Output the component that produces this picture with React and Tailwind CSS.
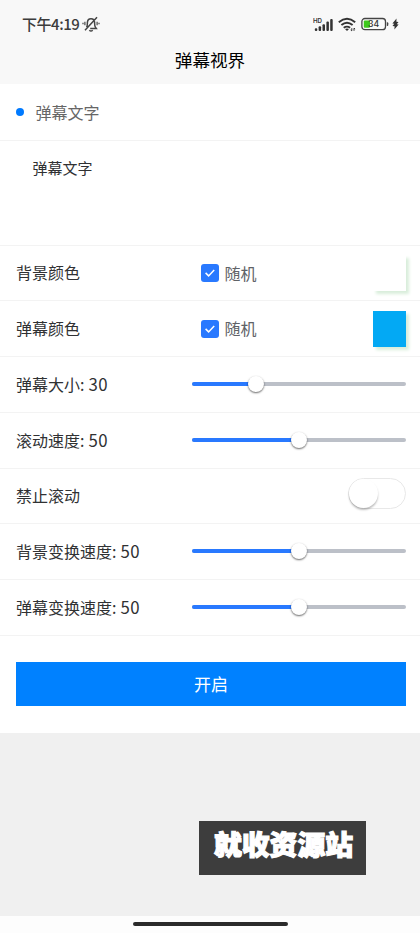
import React from "react";

function StatusBar() {
  return (
    <div className="flex h-[48px] items-center pl-[22px] pr-[21px] text-[#3c3c3c]">
      <span className="pb-[2px] text-[15px] font-medium leading-none tracking-[-0.45px]">下午4:19</span>
      <svg className="ml-[3px]" width="18" height="18" viewBox="0 0 18 18" fill="none" stroke="#444" strokeWidth="1.5">
        <path d="M4.6 12.2c1-1.5.7-3 .8-4.8.3-5 6.9-5 7.2 0 .1 1.8-.2 3.3.8 4.8l.9 1.2H8.2M7.3 15.2q1.7 1.6 3.4 0M15 2.2 3 15.2" />
        <path d="M2.9 6.7v3.6M15.1 6.7v3.6M1 7.7v1.6M17 7.7v1.6" strokeWidth="1.2" />
      </svg>
      <div className="ml-auto flex items-center">
        <svg width="21" height="15" viewBox="0 0 21 15" fill="#333">
          <text x="0" y="5.6" fontSize="6.2" fontFamily="Inter, sans-serif" fontWeight="600">HD</text>
          <rect x="1.8" y="11.2" width="2.5" height="2.8" rx="1" />
          <rect x="5.6" y="9.2" width="2.5" height="4.8" rx="1" />
          <rect x="9.5" y="7.2" width="2.5" height="6.8" rx="1" />
          <rect x="13.4" y="4.6" width="2.5" height="9.4" rx="1" />
          <rect x="17.2" y="2" width="2.5" height="12" rx="1" />
        </svg>
        <svg className="ml-[4px]" width="18" height="15" viewBox="0 0 18 15" fill="none" stroke="#333" strokeWidth="1.9">
          <path d="M.8 5.2q8.2-6.8 16.4 0M3.4 8.1q5.6-4.7 11.2 0M5.7 10.8q3.3-2.4 6.4 0" />
          <path d="m7 12 2 2 2-2q-2-1-4 0z" fill="#333" stroke="none" />
          <path d="M13.8 11.2v2.6l-1.1-.8M16 13.8v-2.6l1.1.8" strokeWidth="1" />
        </svg>
        <svg className="ml-[5px]" width="28" height="14" viewBox="0 0 28 14">
          <rect x=".9" y="1.5" width="23.6" height="11.2" rx="3" fill="#fafafa" stroke="#444" strokeWidth="1.3" />
          <rect x="2.8" y="3.4" width="6.2" height="7.4" rx="1" fill="#3fc91c" />
          <path d="M25.8 5.3h.5q1 0 1 1v1.6q0 1-1 1h-.5z" fill="#444" />
          <text x="12.6" y="10.3" textAnchor="middle" fontSize="8.7" fontFamily="Inter, sans-serif" fontWeight="500" fill="#333">34</text>
        </svg>
        <svg className="ml-[3px]" width="7" height="12" viewBox="0 0 7 12" fill="#333">
          <path d="M4.5.5.4 5.4l1.9.4L.5 7.9l2.1.3-.2 3.3 4.2-4.9-1.9-.4 1.8-2.1-2.1-.3z" />
        </svg>
      </div>
    </div>
  );
}

function Slider({ value }) {
  return (
    <div className="relative mb-px ml-auto h-[4px] w-[214px] rounded-full bg-[#bcc0c8]">
      <div className="h-full rounded-full bg-[#2979ff]" style={{ width: `${value}%` }} />
      <div
        className="absolute top-[-6px] size-4 -translate-x-1/2 rounded-full bg-white shadow-[0_1px_2px_rgba(0,0,0,0.6)]"
        style={{ left: `${value}%` }}
      />
    </div>
  );
}

function RandomColor({ swatch }) {
  return (
    <>
      <div className="ml-[120.5px] flex items-center">
        <span className="flex size-[18px] items-center justify-center rounded-[3px] bg-[#2979ff]">
          <svg width="12" height="12" viewBox="0 0 12 12" fill="none" stroke="#fff" strokeWidth="1.5">
            <path d="m1.6 5.9 3 3 5.6-6" />
          </svg>
        </span>
        <span className="ml-[6px] pb-px text-[#606266]">随机</span>
      </div>
      <div className={`ml-auto h-[36px] w-[33px] shadow-[3px_3px_3px_#d9eedb] ${swatch}`} />
    </>
  );
}

function Row({ label, height, children }) {
  return (
    <div className={`flex items-center border-b border-[#f3f3f3] pl-4 pr-[14px] ${height}`}>
      <span className="whitespace-nowrap pb-[2px]">{label}</span>
      {children}
    </div>
  );
}

function Label({ name, value }) {
  return (
    <>
      {name}: <span className="ml-[0.5px] text-[16.8px] leading-none tracking-[0.3px]">{value}</span>
    </>
  );
}

export default function App() {
  return (
    <div className="flex h-[933px] w-[420px] flex-col overflow-hidden bg-[#f0f0f0] font-['Noto_Sans_CJK_SC',sans-serif] text-[16px] leading-6 text-[#303133]">
      <header className="h-[84px] bg-[#f8f8f8]">
        <StatusBar />
        <h1 className="text-center text-[17.6px] leading-[24px] text-black">弹幕视界</h1>
      </header>
      <main className="h-[649px] bg-white">
        <div className="flex h-[57px] items-center border-b border-[#f3f3f3] pl-4">
          <span className="size-2 rounded-full bg-[#007aff]" />
          <span className="ml-[11.5px] pb-px text-[#666]">弹幕文字</span>
        </div>
        <div className="h-[105px] border-b border-[#f3f3f3] pl-[32.5px] pt-[15px] text-[15px]">弹幕文字</div>
        <Row label="背景颜色" height="h-[55px]"><RandomColor swatch="bg-white" /></Row>
        <Row label="弹幕颜色" height="h-[56px]"><RandomColor swatch="bg-[#03a9f4]" /></Row>
        <Row label={<Label name="弹幕大小" value={30} />} height="h-[56px]"><Slider value={30} /></Row>
        <Row label={<Label name="滚动速度" value={50} />} height="h-[56px]"><Slider value={50} /></Row>
        <Row label="禁止滚动" height="h-[55px]">
          <div className="mb-[6px] ml-auto h-[31px] w-[58px] rounded-full border border-[#e8e8e8] bg-white">
            <div className="size-[29px] rounded-full bg-white shadow-[0_2px_2px_rgba(0,0,0,0.25)]" />
          </div>
        </Row>
        <Row label={<Label name="背景变换速度" value={50} />} height="h-[56px]"><Slider value={50} /></Row>
        <Row label={<Label name="弹幕变换速度" value={50} />} height="h-[56px]"><Slider value={50} /></Row>
        <button className="mx-4 mt-[26px] block h-[44px] w-[390px] bg-[#0081ff] pb-px text-[17px] text-white">开启</button>
      </main>
      <div className="flex h-[183px] items-end pb-[41px] pl-[199px]">
        <div className="h-[54px] w-[167px] bg-[#3d3d3d] pl-[15px] pt-[5px] text-[27.8px] font-black leading-[34px] text-white [-webkit-text-stroke:1.2px_white]">
          就收资源站
        </div>
      </div>
      <footer className="flex h-[17px] justify-center bg-[#fdfdfd] pt-[6px]">
        <div className="h-[4px] w-[155px] rounded-full bg-[#2b2b2b]" />
      </footer>
    </div>
  );
}
